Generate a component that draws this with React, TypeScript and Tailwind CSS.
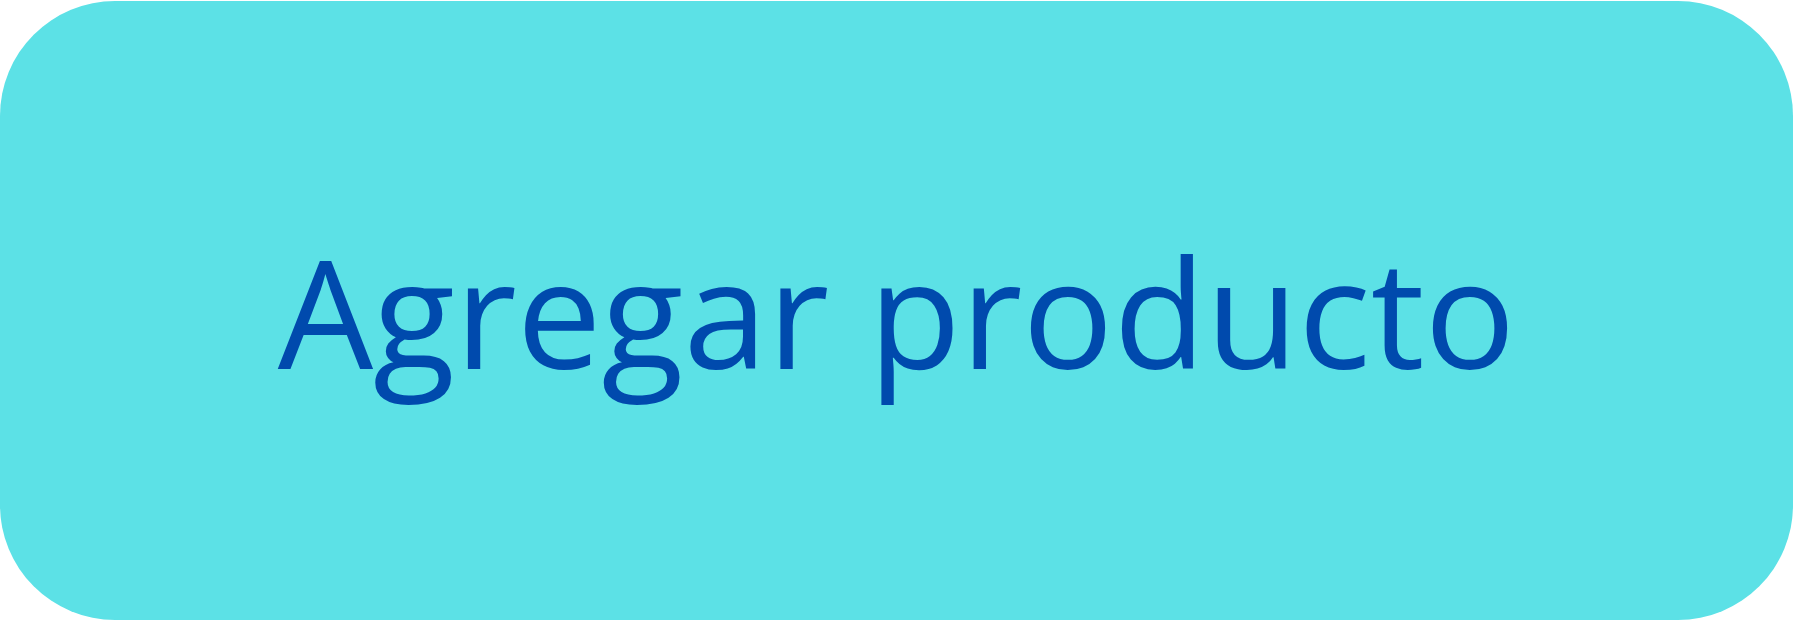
export default function App() {
  return (
    <div className="w-[1796px] h-[622px] bg-white pt-px">
      <button
        type="button"
        className="flex h-[619px] w-[1793px] items-center justify-center rounded-[115px] bg-[#5ce1e6] text-[151px] leading-none text-[#004aad]"
        style={{ fontFamily: '"Open Sans", sans-serif' }}
      >
        Agregar producto
      </button>
    </div>
  );
}
